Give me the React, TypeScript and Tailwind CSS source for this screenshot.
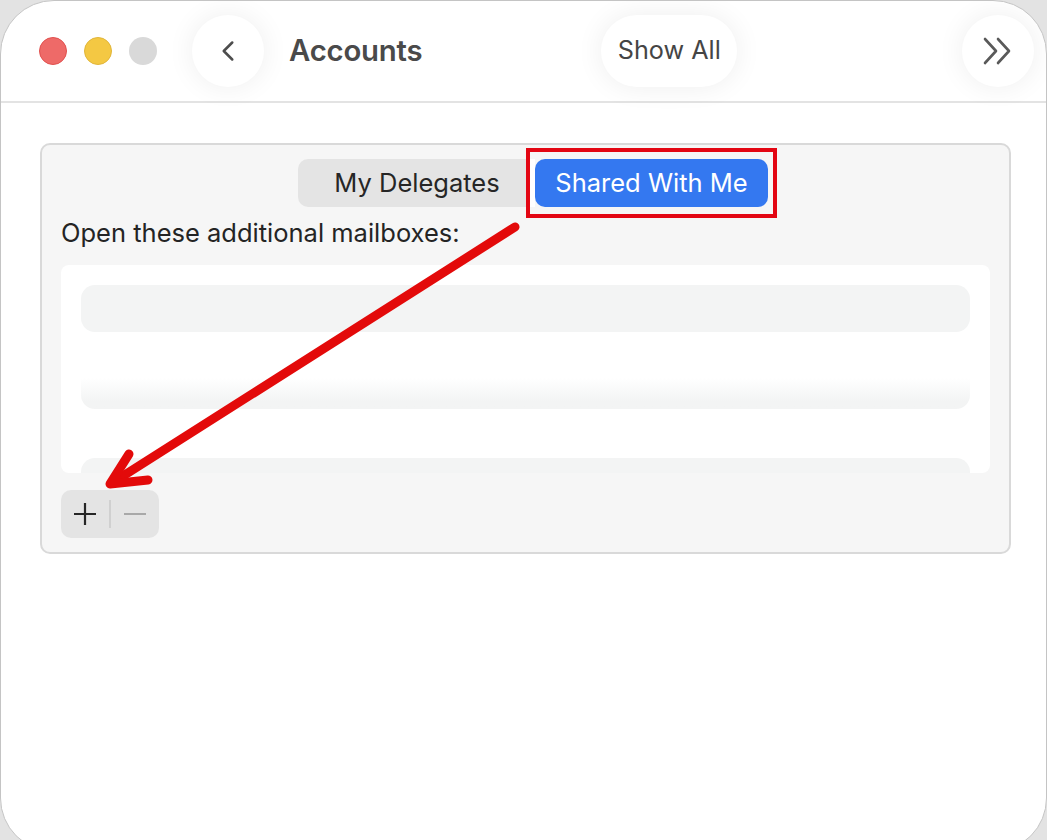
import { ChevronLeft } from 'lucide-react'

const font = { fontFamily: 'Inter, "Noto Sans", sans-serif' }

function RoundButton({ children, className = '' }: { children: React.ReactNode; className?: string }) {
  return (
    <div
      className={`flex h-[72px] items-center justify-center rounded-full bg-white shadow-[0_0_28px_rgba(0,0,0,0.07)] ${className}`}
    >
      {children}
    </div>
  )
}

export default function App() {
  return (
    <div className="relative h-[840px] w-[1047px] overflow-hidden bg-[#e3e3e3]" style={font}>
      <div className="h-[852px] w-full overflow-hidden rounded-[54px] border border-[#c4c4c4] bg-white">
        {/* titlebar */}
        <div className="flex h-[102px] items-center border-b-2 border-[#e3e3e3] pl-[38px] pr-[12px]">
          <div className="flex items-center gap-[17px]">
            <span className="h-[28px] w-[28px] rounded-full border border-[#e0504e] bg-[#ee6a68]" />
            <span className="h-[28px] w-[28px] rounded-full border border-[#e0b53a] bg-[#f4c843]" />
            <span className="h-[28px] w-[28px] rounded-full bg-[#d9d9d9]" />
          </div>
          <RoundButton className="ml-[35px] w-[72px]">
            <ChevronLeft className="h-[34px] w-[34px] text-[#4d4d4d]" strokeWidth={1.8} />
          </RoundButton>
          <h1 className="ml-[25px] text-[29.3px] font-semibold tracking-[-0.2px] text-[#4a4a4a]">Accounts</h1>
          <RoundButton className="ml-[179px] w-[136px]">
            <span className="text-[25.2px] text-[#454545]">Show All</span>
          </RoundButton>
          <div className="flex-1" />
          <RoundButton className="w-[72px]">
            <svg width="34" height="30" viewBox="0 0 34 30" fill="none" stroke="#5a5a5a" strokeWidth="2.6" strokeLinecap="round" strokeLinejoin="round">
              <path d="M4 3l11 12-11 12" />
              <path d="M17 3l11 12-11 12" />
            </svg>
          </RoundButton>
        </div>

        {/* content */}
        <div className="pl-[39px] pt-[40px]">
          <div className="h-[411px] w-[971px] rounded-[10px] border-2 border-[#d9d9d9] bg-[#f6f6f6] px-[19px] pt-[14px]">
            <div className="ml-[237px] flex items-center">
              <div className="flex h-[48px] w-[228px] items-center justify-center rounded-l-[10px] bg-[#e4e4e4] text-[25.5px] text-[#262626]">
                <span className="pl-[10px]">My Delegates</span>
              </div>
              <div className="h-[48px] w-[9px] bg-white" />
              <div className="relative">
                <div className="flex h-[48px] w-[233px] items-center justify-center rounded-[10px] bg-[#3478f0] text-[25.5px] text-white">
                  Shared With Me
                </div>
                <div className="absolute -left-[9px] -top-[11px] h-[70px] w-[251px] border-[4px] border-[#e30613]" />
              </div>
            </div>
            <p className="mt-[10px] text-[25.5px] leading-[32px] text-[#242424]">Open these additional mailboxes:</p>
            <div className="mt-[16px] h-[208px] overflow-hidden rounded-[8px] bg-white px-[20px] pt-[20px]">
              <div className="h-[47px] rounded-[14px] bg-[#f3f4f4]" />
              <div className="h-[77px] rounded-b-[14px] bg-gradient-to-b from-white from-60% to-[#f3f4f4] to-90%" />
              <div className="h-[49px]" />
              <div className="h-[47px] rounded-[14px] bg-[#f3f4f4]" />
            </div>
            <div className="mt-[17px] flex h-[48px] w-[98px] items-center rounded-[10px] bg-[#e4e4e4]">
              <span className="flex w-[48px] items-center justify-center">
                <svg width="22" height="22" viewBox="0 0 22 22" stroke="#262626" strokeWidth="2.2">
                  <path d="M11 0v22M0 11h22" />
                </svg>
              </span>
              <span className="h-[28px] w-[2px] bg-[#d0d0d0]" />
              <span className="flex w-[48px] items-center justify-center">
                <svg width="22" height="4" viewBox="0 0 22 4" stroke="#a8a8a8" strokeWidth="2">
                  <path d="M0 2h22" />
                </svg>
              </span>
            </div>
          </div>
        </div>
      </div>

      {/* annotation arrow */}
      <svg className="pointer-events-none absolute left-0 top-0" width="1047" height="840" viewBox="0 0 1047 840" fill="none">
        <path d="M515 227L112 483" stroke="#e30a0a" strokeWidth="9" strokeLinecap="round" />
        <path d="M129 454L110 484L148 480" stroke="#e30a0a" strokeWidth="9" strokeLinecap="round" strokeLinejoin="round" />
      </svg>
    </div>
  )
}
